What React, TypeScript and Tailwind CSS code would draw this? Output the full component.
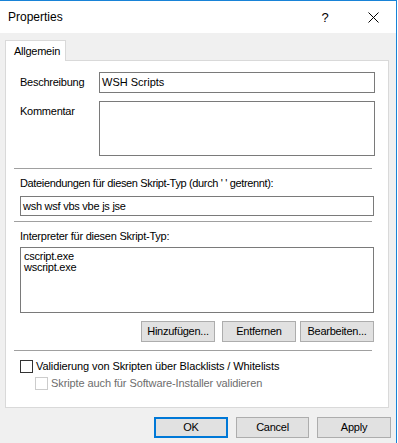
import React from 'react';

function Btn({ label, w, focused, className }: { label: string; w: string; focused?: boolean; className?: string }) {
  return (
    <div
      className={`${w} h-[21px] flex items-center justify-center bg-[#e1e1e1] ${
        focused ? 'border-2 border-[#0078d7]' : 'border border-[#adadad]'
      } ${className ?? ''}`}
    >
      {label}
    </div>
  );
}

export default function App() {
  return (
    <div className="w-[397px] h-[443px] border-t border-r border-[#1883d7] bg-[#f0f0f0] font-['Liberation_Sans',Arial,sans-serif] text-[11px] leading-[13px] tracking-[-0.25px] text-black flex flex-col overflow-hidden">
      {/* Title bar */}
      <div className="h-[32px] shrink-0 bg-white flex items-center pl-[8px] tracking-normal">
        <span className="text-[12px]">Properties</span>
        <span className="ml-auto w-[46px] text-center text-[13px]">?</span>
        <div className="ml-[2px] w-[46px] flex justify-center">
          <svg width="11" height="11" viewBox="0 0 11 11">
            <path d="M0.5 0.5 L10.5 10.5 M10.5 0.5 L0.5 10.5" stroke="#000" strokeWidth="1" />
          </svg>
        </div>
      </div>

      {/* Tabs */}
      <div className="pt-[7px]">
        <div className="relative z-10 -mb-px ml-[5px] w-[61px] h-[21px] border border-b-0 border-[#d9d9d9] bg-white pl-[8px] flex items-center">
          Allgemein
        </div>
        <div className="ml-[5px] w-[384px] h-[348px] border border-[#d9d9d9] bg-white pt-[11px] pl-[8px] flex flex-col">
          <div className="flex items-center">
            <span className="ml-[6px] w-[79px]">Beschreibung</span>
            <div className="w-[276px] h-[21px] border border-[#7a7a7a] flex items-center pl-[2px] tracking-normal">WSH Scripts</div>
          </div>
          <div className="flex mt-[8px]">
            <span className="ml-[6px] w-[79px] pt-[4px]">Kommentar</span>
            <div className="w-[276px] h-[55px] border border-[#7a7a7a]" />
          </div>

          <div className="mt-[12px] w-[358px] h-px bg-[#a0a0a0]" />

          <div className="ml-[6px] mt-[8px] tracking-[-0.35px]">Dateiendungen für diesen Skript-Typ (durch ' ' getrennt):</div>
          <div className="ml-[6px] mt-[6px] w-[354px] h-[20px] border border-[#7a7a7a] flex items-center pl-[2px]">
            wsh wsf vbs vbe js jse
          </div>

          <div className="mt-[5px] w-[358px] h-px bg-[#a0a0a0]" />

          <div className="ml-[6px] mt-[8px]">Interpreter für diesen Skript-Typ:</div>
          <div className="ml-[6px] mt-[4px] w-[354px] h-[66px] border border-[#7a7a7a] pl-[3px] pt-[3px] leading-[11px]">
            <div>cscript.exe</div>
            <div>wscript.exe</div>
          </div>

          <div className="mt-[8px] flex">
            <Btn label="Hinzufügen..." w="w-[74px]" className="ml-[127px]" />
            <Btn label="Entfernen" w="w-[74px]" className="ml-[7px]" />
            <Btn label="Bearbeiten..." w="w-[74px]" className="ml-[4px]" />
          </div>

          <div className="mt-[8px] w-[358px] h-px bg-[#a0a0a0]" />

          <div className="mt-[9px] ml-[6px] flex items-center">
            <div className="w-[13px] h-[13px] border border-[#333333] bg-white" />
            <span className="ml-[3px] tracking-[-0.1px]">Validierung von Skripten über Blacklists / Whitelists</span>
          </div>
          <div className="mt-[4px] ml-[21px] flex items-center text-[#6d6d6d]">
            <div className="w-[13px] h-[13px] border border-[#cccccc] bg-white" />
            <span className="ml-[3px] tracking-[-0.1px]">Skripte auch für Software-Installer validieren</span>
          </div>
        </div>
      </div>

      {/* Dialog buttons */}
      <div className="mt-[9px] flex">
        <Btn label="OK" w="w-[74px]" focused className="ml-[154px]" />
        <Btn label="Cancel" w="w-[73px]" className="ml-[8px]" />
        <Btn label="Apply" w="w-[74px]" className="ml-[8px]" />
      </div>
    </div>
  );
}
